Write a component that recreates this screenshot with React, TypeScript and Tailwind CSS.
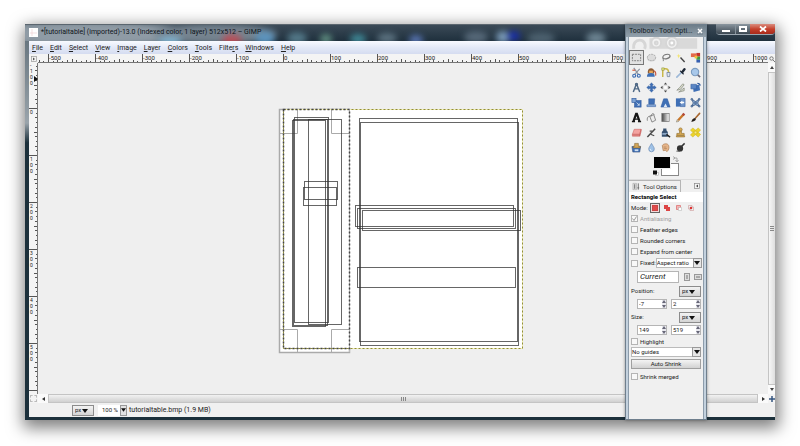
import { useState } from "react";
import type { ReactNode } from "react";

const menus = [
  ["", "F", "ile"],
  ["", "E", "dit"],
  ["", "S", "elect"],
  ["", "V", "iew"],
  ["", "I", "mage"],
  ["", "L", "ayer"],
  ["", "C", "olors"],
  ["", "T", "ools"],
  ["Filte", "r", "s"],
  ["", "W", "indows"],
  ["", "H", "elp"],
];

const BLUE = "#3f6fb5";
const DARK = "#4a4a4a";

const tools: { name: string; icon: ReactNode }[] = [
  {
    name: "Rectangle Select",
    icon: <rect x="1.5" y="2.5" width="9" height="7" fill="#e0e0e0" stroke="#777" strokeDasharray="2 1" />,
  },
  {
    name: "Ellipse Select",
    icon: (
      <g>
        <rect x="1.5" y="3" width="9" height="7" rx="3" fill="#cfcfcf" />
        <ellipse cx="6" cy="6" rx="4.5" ry="3.5" fill="#dcdcdc" stroke="#a5a5a5" strokeDasharray="2 1" />
      </g>
    ),
  },
  {
    name: "Free Select",
    icon: (
      <g fill="none" stroke="#777">
        <ellipse cx="7" cy="5" rx="4" ry="2.3" transform="rotate(-15 7 5)" strokeWidth="1.3" />
        <path d="M3.5 6.5c-.8 1 .8 1.4 0 3.5" />
      </g>
    ),
  },
  {
    name: "Fuzzy Select",
    icon: (
      <g>
        <path d="M6 6l4.5 5" stroke="#444" strokeWidth="1.5" />
        <path d="M4 2l.7 1.8 1.8.4-1.8.8L4 7l-.6-2-1.7-.8 1.7-.4z" fill="#f3e36a" />
      </g>
    ),
  },
  {
    name: "Select by Color",
    icon: (
      <g>
        <rect x="1" y="1.5" width="6" height="4" fill="#e46a4a" />
        <rect x="7" y="1" width="4" height="4" fill="#c5332b" />
        <rect x="7" y="5" width="4" height="3.5" fill="#3a9c44" />
        <rect x="7" y="8.5" width="4" height="3" fill="#355fb0" />
        <rect x="5" y="4" width="3" height="3" fill="#efc23b" />
      </g>
    ),
  },
  {
    name: "Scissors Select",
    icon: (
      <g fill="none" strokeWidth="1.3">
        <path d="M3 1l5 7M9.5 2L4 8" stroke="#8b93a0" />
        <circle cx="3.5" cy="9.5" r="1.6" stroke={BLUE} />
        <circle cx="8.5" cy="9.5" r="1.6" stroke={BLUE} />
        <path d="M1.5 3.5h3" stroke="#d65b3c" />
      </g>
    ),
  },
  {
    name: "Foreground Select",
    icon: (
      <g>
        <path d="M2 5c0-5 7-5 7 0v2H2z" fill="#8a5a34" />
        <path d="M3.5 4h4v3h-4z" fill="#e9a557" />
        <path d="M1 10.5c0-3 1.5-4 4.5-4s4 1 4 4z" fill={BLUE} />
        <path d="M8.5 4c2 .5 2.5 2.5 2 5.500" fill="none" stroke="#c34b32" strokeWidth="1.2" />
      </g>
    ),
  },
  {
    name: "Paths",
    icon: (
      <g fill="none">
        <path d="M3 11V2h3c3 0 3.5 3 3.5 5" stroke="#c9b848" strokeWidth="1.6" />
        <path d="M7.5 6h3.500l-.5 4.500h-2.500z" fill="#dce5f2" stroke="#6d7c92" strokeWidth=".8" />
        <rect x="2" y="1" width="2.5" height="2.5" fill="#dfe87d" stroke="#8a8a3a" strokeWidth=".6" />
      </g>
    ),
  },
  {
    name: "Color Picker",
    icon: (
      <g strokeLinecap="round">
        <path d="M2 11l5-5" stroke="#9db8d8" strokeWidth="1.8" />
        <path d="M6 4.5l3 3" stroke="#1f2836" strokeWidth="1.5" />
        <path d="M8 5.5l2.300-3" stroke="#1f2836" strokeWidth="2.6" />
      </g>
    ),
  },
  {
    name: "Zoom",
    icon: (
      <g>
        <circle cx="5.5" cy="5.500" r="4" fill="#a9c8ea" stroke="#7c9cc0" strokeWidth="1.2" />
        <path d="M8.5 8.500l2.500 2.500" stroke="#667" strokeWidth="1.8" />
      </g>
    ),
  },
  {
    name: "Measure",
    icon: (
      <g fill="none" stroke="#4f6885" strokeWidth="1.6">
        <path d="M6 2L2.500 11M6 2l3.500 9M3.500 7.500h5" />
        <circle cx="6" cy="2.5" r="1" fill="#9fb4cc" />
      </g>
    ),
  },
  {
    name: "Move",
    icon: (
      <path
        d="M6 .8l2 2.400H7V5h1.800V4l2.400 2-2.400 2V7H7v1.800h1L6 11.200 4 8.800h1V7H3.200v1L.8 6l2.400-2v1H5V3.200H4z"
        fill={BLUE}
        stroke="#2f5a9d"
        strokeWidth=".5"
      />
    ),
  },
  {
    name: "Align",
    icon: (
      <g fill={DARK}>
        <path d="M6 .5l1.800 2.300H4.200zM6 11.500l1.800-2.300H4.200zM.5 6l2.300-1.800v3.600zM11.500 6L9.200 4.200v3.600z" />
        <rect x="4" y="4" width="4" height="4" fill="#fff" stroke="#aaa" strokeDasharray="1 1" strokeWidth=".7" />
      </g>
    ),
  },
  {
    name: "Crop",
    icon: (
      <g fill="#d9dccb" stroke="#878b80" strokeWidth=".8">
        <path d="M2 9l4-1 4-5-1.500-1L5 6z" />
        <path d="M4 11l6-1.500V6.500L8 8z" />
      </g>
    ),
  },
  {
    name: "Rotate",
    icon: (
      <g fill={BLUE}>
        <path d="M3 4l7-1 1 6-7 2z" />
        <path d="M1 2.500h6v5H1z" fill="#5b86c4" stroke="#2f5a9d" strokeWidth=".6" />
        <path d="M8 1.500c2 0 3 1 3 2.500" fill="none" stroke="#2f5a9d" strokeWidth="1.2" />
      </g>
    ),
  },
  {
    name: "Scale",
    icon: (
      <g>
        <rect x="4" y="4" width="7" height="7" fill={BLUE} stroke="#2f5a9d" strokeWidth=".7" />
        <rect x="1" y="1.5" width="4.5" height="4.5" fill="#7ea3d4" stroke="#2f5a9d" strokeWidth=".7" />
        <path d="M6 6l3 3M9 7v2H7" stroke="#dfe9f6" strokeWidth=".8" fill="none" />
      </g>
    ),
  },
  {
    name: "Shear",
    icon: (
      <g fill={BLUE} stroke="#2f5a9d" strokeWidth=".6">
        <path d="M3 2h6.500L9 8H3z" />
        <path d="M1 8.500h9.500v2H1z" fill="#8fb0dc" />
      </g>
    ),
  },
  {
    name: "Perspective",
    icon: (
      <g>
        <path d="M4 2h4l3 9H1z" fill={BLUE} stroke="#2f5a9d" strokeWidth=".6" />
        <path d="M6 7l2 4H4z" fill="#dfe9f6" />
      </g>
    ),
  },
  {
    name: "Flip",
    icon: (
      <g>
        <path d="M1 1.500h5v9H1z" fill={BLUE} />
        <path d="M6 1.500h5v9H6z" fill="#6d93c9" stroke="#2f5a9d" strokeWidth=".6" />
        <path d="M8 4v1.300h2v1.400H8V8L5 6z" fill="#fff" />
      </g>
    ),
  },
  {
    name: "Cage Transform",
    icon: (
      <g fill="#89a8cf" stroke="#34547f" strokeWidth=".8">
        <path d="M2 2.500L6 5l4-2.500L8.500 6.500 10 10 6 8.500 2 10l1.500-3.500z" />
        <circle cx="2" cy="2.5" r="1" />
        <circle cx="10" cy="2.5" r="1" />
        <circle cx="2" cy="10" r="1" />
        <circle cx="10" cy="10" r="1" />
        <circle cx="6" cy="6.5" r="1" />
      </g>
    ),
  },
  {
    name: "Text",
    icon: (
      <g stroke="#161616" fill="none">
        <path d="M2.600 10.500L5.600 2h.8l3 8.500" strokeWidth="2.4" />
        <path d="M4 7.700h4M1 10.500h3.400M7.600 10.500H11" strokeWidth="1.4" />
      </g>
    ),
  },
  {
    name: "Bucket Fill",
    icon: (
      <g fill="#ececec" stroke="#777" strokeWidth=".9">
        <path d="M4 4.500l4.500-1.500 2 6-4 2z" />
        <path d="M5.500 5c0-3 2.500-4.500 3.500-2" fill="none" />
        <path d="M4 4.500C1.500 5 1 7 1.500 9.500" fill="none" />
      </g>
    ),
  },
  {
    name: "Blend",
    icon: <rect x="2" y="1.5" width="8" height="9" fill="url(#blend)" stroke="#777" strokeWidth=".8" />,
  },
  {
    name: "Pencil",
    icon: (
      <g>
        <path d="M3.500 9l6-6.500" stroke="#c9772b" strokeWidth="2.6" />
        <path d="M8.500 3.500l1.700-1.800" stroke="#b2473a" strokeWidth="2.6" />
        <path d="M1.500 11l.8-2.800 2 2z" fill="#e8cf9c" stroke="#555" strokeWidth=".4" />
      </g>
    ),
  },
  {
    name: "Paintbrush",
    icon: (
      <g strokeLinecap="round">
        <path d="M6 6.500l4.500-5" stroke="#a8672f" strokeWidth="1.7" />
        <path d="M1.500 10.800c.5-2.300 1.500-4 4-4.300l1 1.200c-.5 2-2.500 3-5 3.100z" fill="#26201c" />
      </g>
    ),
  },
  {
    name: "Eraser",
    icon: (
      <g stroke="#c9625f" strokeWidth=".6">
        <path d="M3.500 2.500h7.500L9.500 8H1.500z" fill="#f3a3a1" />
        <path d="M1.500 8h8v2h-8zM9.500 8L11 2.500v2.500L9.500 10z" fill="#e0807d" />
      </g>
    ),
  },
  {
    name: "Airbrush",
    icon: (
      <g stroke={DARK} fill="none">
        <path d="M1.500 11L10 2" strokeWidth="1.6" />
        <path d="M4 4.500h3M5 8l4 1.500" strokeWidth="1.2" />
      </g>
    ),
  },
  {
    name: "Ink",
    icon: (
      <g>
        <path d="M3.500 1.500h3.500v2l1.500 2v5H2v-5l1.500-2z" fill="#36506f" />
        <path d="M2.500 6.500H8v2H2.500z" fill="#8ba5c4" />
        <path d="M7 8l4 3" stroke="#222" strokeWidth="1.5" />
      </g>
    ),
  },
  {
    name: "Clone",
    icon: (
      <g fill="#dcae56" stroke="#8e6a28" strokeWidth=".7">
        <circle cx="6" cy="2.8" r="1.8" />
        <path d="M5 4.500h2v2.500h3v2H2V7h3z" />
        <path d="M1.500 9.500h9v1.300h-9z" />
      </g>
    ),
  },
  {
    name: "Heal",
    icon: (
      <g fill="#ecd42c" stroke="#d0b51c" strokeWidth=".6">
        <path d="M.5 3.500l2.500-2.500 8.500 7-2.500 3z" />
        <path d="M11.500 3.500L9 1 .5 8.500 3 11z" />
        <rect x="4.500" y="4.500" width="3" height="3" fill="#f7eb87" />
      </g>
    ),
  },
  {
    name: "Perspective Clone",
    icon: (
      <g>
        <path d="M1 5h9.500l-1 6H2z" fill={BLUE} stroke="#2f4a75" strokeWidth=".6" />
        <path d="M4 1.500h4v3h2v2H2.500v-2H4z" fill="#d3a557" stroke="#7b5c27" strokeWidth=".6" />
        <path d="M4 8h4v2H4z" fill="#cfdff2" />
      </g>
    ),
  },
  {
    name: "Blur / Sharpen",
    icon: (
      <g>
        <path d="M6 1.500c1.500 3 3 4 3 6.200a3 3 0 01-6 0C3 5.500 4.500 4.500 6 1.500z" fill="#9fc1e6" stroke="#6d8fb8" strokeWidth=".8" />
        <path d="M4.500 7.500c0 1.200.6 1.800 1.500 2" fill="none" stroke="#fff" strokeWidth=".8" />
      </g>
    ),
  },
  {
    name: "Smudge",
    icon: (
      <g fill="#e6b58a" stroke="#a97a50" strokeWidth=".7">
        <path d="M2.500 4c1-2.500 6-3 7 0 .8 2.500 0 5-2 6.500L6 9 3.500 9.500z" />
        <path d="M4 5.500h3M4.500 7.200h3" />
      </g>
    ),
  },
  {
    name: "Dodge / Burn",
    icon: (
      <g>
        <circle cx="5.5" cy="7" r="3.400" fill="#333" />
        <path d="M6.500 5.500l4-4" stroke="#333" strokeWidth="1.6" />
        <path d="M1.500 10h4" stroke="#555" />
      </g>
    ),
  },
];

// rectangles on the canvas, as x1, y1, x2, y2
const leftBoxes = [
  [11.5, 8.5, 45.5, 213.5],
  [9.5, 11.5, 42.5, 217.5],
  [10.5, 10.5, 44.5, 216.5],
  [25.5, 10.5, 58.5, 215.5],
  [21.5, 72.5, 54.5, 90.5],
  [20.5, 78.5, 53.5, 96.5],
];
const rightBoxes = [
  [76.5, 9.5, 234.5, 232.5],
  [77.5, 13.5, 235.5, 236.5],
  [72.5, 96.5, 230.5, 117.5],
  [74.5, 99.5, 232.5, 119.5],
  [79.5, 101.5, 237.5, 121.5],
  [74.5, 158.5, 232.5, 178.5],
];

function tickLength(unit: number) {
  if (unit % 100 === 0) return 9;
  if (unit % 50 === 0) return 4;
  return unit % 20 === 0 ? 3 : 2;
}

function Ruler({ vertical, from, to, zero }: { vertical?: boolean; from: number; to: number; zero: number }) {
  const units: number[] = [];
  for (let u = from; u <= to; u += 10) units.push(u);
  return (
    <svg className="h-full w-full" fontFamily="Roboto, sans-serif" fontSize={vertical ? 5 : 6} fill="#222">
      {units.map((u) => {
        const p = Math.round(zero + u * 0.47) + 0.5;
        const len = tickLength(u);
        return vertical ? (
          <path key={u} d={`M${9 - len} ${p}h${len}`} stroke="#555" />
        ) : (
          <path key={u} d={`M${p} ${9 - len}v${len}`} stroke="#555" />
        );
      })}
      {units
        .filter((u) => u % 100 === 0 && !(vertical && u > 500))
        .map((u) => {
          const p = Math.round(zero + u * 0.47);
          if (!vertical) {
            return (
              <text key={u} x={p + 1} y="6">
                {u}
              </text>
            );
          }
          return String(u)
            .split("")
            .map((c, i) => (
              <text key={`${u}-${i}`} x="1" y={p + 6 + i * 6}>
                {c}
              </text>
            ));
        })}
      <path d={vertical ? "M8.500 0v2000" : "M0 8.500h4000"} stroke="#777" />
    </svg>
  );
}

function Down({ className = "" }: { className?: string }) {
  return (
    <svg viewBox="0 0 6 4" className={`pointer-events-none h-1 w-1.5 ${className}`}>
      <path d="M0 0h6L3 4z" fill="#111" />
    </svg>
  );
}

function UnitSelect({ label }: { label: string }) {
  return (
    <span className="relative flex">
      <select
        aria-label={label}
        className="h-[11px] w-[22px] appearance-none border border-[#8c8c8c] bg-linear-to-b from-[#f3f3f3] to-[#d4d4d4] pl-0.5 text-[6px] leading-[8px]"
      >
        <option>px</option>
        <option>in</option>
        <option>mm</option>
      </select>
      <Down className="absolute top-1 right-1.5" />
    </span>
  );
}

function Spin({ label, value }: { label: string; value: string }) {
  return (
    <div className="flex h-[10px] flex-1 border border-[#b5b5b5] bg-white">
      <input aria-label={label} defaultValue={value} className="w-full min-w-0 pl-px text-[6px] leading-[8px]" />
      <div className="flex w-1 shrink-0 flex-col justify-between bg-[#e8e8ee]">
        <button aria-label={`Increase ${label}`} className="flex">
          <svg viewBox="0 0 4 3" className="h-[3px] w-1">
            <path d="M0 3h4L2 0z" fill="#667" />
          </svg>
        </button>
        <button aria-label={`Decrease ${label}`} className="flex">
          <svg viewBox="0 0 4 3" className="h-[3px] w-1">
            <path d="M0 0h4L2 3z" fill="#667" />
          </svg>
        </button>
      </div>
    </div>
  );
}

function Check({ label, disabled, checked }: { label: string; disabled?: boolean; checked?: boolean }) {
  return (
    <label className={`flex h-[11px] items-center gap-0.5 ${disabled ? "text-[#a0a0a0]" : ""}`}>
      <span className="relative flex">
        <input
          type="checkbox"
          disabled={disabled}
          defaultChecked={checked}
          className="peer h-[7px] w-[7px] appearance-none border border-[#b4b4b4] bg-[#f8f8f8]"
        />
        <svg viewBox="0 0 7 7" className="pointer-events-none absolute inset-0 hidden h-[7px] w-[7px] peer-checked:block">
          <path d="M1.500 3.500L3 5.500 5.500 1.500" fill="none" stroke="#999" />
        </svg>
      </span>
      {label}
    </label>
  );
}

function Toolbox() {
  const [tool, setTool] = useState("Rectangle Select");
  return (
    <aside className="absolute top-0 right-[68px] bottom-0 flex w-[82px] flex-col border border-[#6f7f8d] bg-[#c3d1de] px-0.5 text-[6px] leading-[8px] text-[#222] shadow-[0_0_3px_rgba(0,0,0,0.4)]">
      <header className="-mx-0.5 flex h-[12px] shrink-0 items-center justify-between bg-linear-to-b from-[#6d7d89] to-[#93a1ac] px-[3px]">
        <h2 className="text-[7px] whitespace-nowrap text-[#161c22]">Toolbox - Tool Opti...</h2>
        <button aria-label="Close toolbox" className="flex h-2 w-1.5 items-center justify-center bg-[#7c8b97]">
          <svg viewBox="0 0 6 6" className="h-1.5 w-1.5">
            <path d="M1 1l4 4M5 1L1 5" stroke="#fff" strokeWidth="1.5" />
          </svg>
        </button>
      </header>
      <div className="flex flex-1 flex-col border-x border-[#8c9cab] bg-[#f0f0f0]">
        <svg viewBox="0 0 76 13" className="h-[13px] w-full shrink-0">
          <path d="M21 1h49v11H21z" fill="#d9d9d9" />
          <g fill="#f2f2f2" stroke="#d6d6d6" strokeWidth="2">
            <path d="M5 12c-1-6 2-9 6-9s7 4 5 9" fill="none" strokeWidth="3" />
            <circle cx="28" cy="5.5" r="5" />
            <circle cx="28" cy="6" r="1.5" />
            <circle cx="44" cy="6" r="6" />
            <circle cx="44" cy="6" r="2.5" fill="#fff" />
          </g>
        </svg>
        <div className="grid grid-cols-5">
          {tools.map((t) => (
            <button
              key={t.name}
              title={t.name}
              aria-pressed={tool === t.name}
              onClick={() => setTool(t.name)}
              className={`flex h-[15px] items-center justify-center border ${
                tool === t.name ? "border-[#777] bg-[#e2e2e2]" : "border-transparent"
              }`}
            >
              <svg viewBox="0 0 12 12" className="h-[11px] w-[11px] shrink-0">
                {t.icon}
              </svg>
            </button>
          ))}
        </div>
        <div className="flex h-[24px] shrink-0 justify-center">
          <svg viewBox="0 0 28 22" className="h-[22px] w-[28px]">
            <rect x="9.500" y="8.500" width="17" height="12" fill="#fff" stroke="#888" />
            <rect x="1" y="1" width="18" height="13" fill="#eee" />
            <rect x="2" y="2" width="16" height="11" fill="#000" />
            <path d="M22 3h3v3M21 1.500l2 1.500-2 1.500M23.500 5l1.500 2 1.500-2" fill="none" stroke="#999" strokeWidth=".8" />
            <rect x="3.500" y="17.500" width="3" height="3" fill="#fff" stroke="#999" strokeWidth=".5" />
            <rect x="1" y="15.500" width="4" height="4" fill="#111" />
          </svg>
        </div>
        <div className="flex h-[13px] shrink-0 items-center justify-between border-t border-[#ddd] pr-[3px]">
          <button className="flex h-[13px] items-center gap-0.5 border-t border-r border-[#b5b5b5] px-[3px] text-[6px] whitespace-nowrap">
            <svg viewBox="0 0 10 9" className="h-[9px] w-[9px]">
              <path d="M1 1h4v7H1z" fill="#ddd" stroke="#999" strokeWidth=".5" />
              <path d="M3 2v5M7 1v7M6 6h2" stroke="#666" />
            </svg>
            Tool Options
          </button>
          <button aria-label="Configure this tab">
            <svg viewBox="0 0 6 6" className="h-1.5 w-1.5">
              <rect x=".5" y=".5" width="5" height="5" fill="#f4f4f4" stroke="#888" strokeWidth=".7" />
              <path d="M4 1.500v3L2 3z" fill="#444" />
            </svg>
          </button>
        </div>
        <h3 className="h-[10px] shrink-0 bg-white px-0.5 leading-[10px] font-bold whitespace-nowrap text-black">
          Rectangle Select
        </h3>
        <div className="flex flex-col px-0.5 whitespace-nowrap">
          <div className="flex h-[11px] items-center gap-0.5">
            Mode:
            <button aria-label="Replace selection" className="border border-[#666] bg-[#f3dada] p-px">
              <svg viewBox="0 0 6 6" className="h-1.5 w-1.5">
                <rect x=".5" y=".5" width="5" height="5" fill="#e04a4a" stroke="#c44" />
              </svg>
            </button>
            <button aria-label="Add to selection" className="px-0.5">
              <svg viewBox="0 0 6 6" className="h-1.5 w-1.5">
                <path d="M0 0h4v2h2v4H2V4H0z" fill="#dd4545" />
              </svg>
            </button>
            <button aria-label="Subtract from selection" className="px-0.5">
              <svg viewBox="0 0 6 6" className="h-1.5 w-1.5">
                <path d="M4.500 .5h-4v4h2v-2h2z" fill="#f3b6b6" stroke="#d66" strokeWidth=".7" />
                <path d="M2.500 2.500h3v3h-3z" fill="#fff" stroke="#bbb" strokeWidth=".6" />
              </svg>
            </button>
            <button aria-label="Intersect with selection" className="px-0.5">
              <svg viewBox="0 0 6 6" className="h-1.5 w-1.5">
                <path d="M.5 .5h3.500v3.500H.5zM2 2h3.500v3.500H2z" fill="none" stroke="#c99" strokeWidth=".6" />
                <path d="M2 2h2v2H2z" fill="#d33" />
              </svg>
            </button>
          </div>
          <Check label="Antialiasing" disabled checked />
          <Check label="Feather edges" />
          <Check label="Rounded corners" />
          <Check label="Expand from center" />
          <div className="flex h-[12px] items-center justify-between">
            <Check label="Fixed:" />
            <span className="relative flex">
              <select
                aria-label="Fixed property"
                className="h-[10px] w-[46px] appearance-none border border-[#bbb] bg-white text-[6px] leading-[8px]"
              >
                <option>Aspect ratio</option>
                <option>Width</option>
                <option>Height</option>
                <option>Size</option>
              </select>
              <span className="pointer-events-none absolute inset-y-0 right-0 flex w-[9px] items-center justify-center border border-[#999] bg-[#e6e6e6]">
                <Down />
              </span>
            </span>
          </div>
          <div className="flex h-[15px] items-center pl-[6px]">
            <input
              aria-label="Aspect ratio"
              defaultValue="Current"
              className="h-[12px] w-[42px] border border-[#b5b5b5] bg-white pl-0.5 text-[8px] italic"
            />
            <button aria-label="Portrait" className="ml-1 p-px">
              <svg viewBox="0 0 6 8" className="h-2 w-1.5">
                <rect x=".5" y=".5" width="5" height="7" fill="#ddd" stroke="#999" />
                <path d="M2 3h2M2 5h2" stroke="#777" />
              </svg>
            </button>
            <button aria-label="Landscape" className="ml-0.5 p-px">
              <svg viewBox="0 0 8 6" className="h-1.5 w-2">
                <rect x=".5" y=".5" width="7" height="5" fill="#ddd" stroke="#999" />
                <path d="M2 3h4" stroke="#777" />
              </svg>
            </button>
          </div>
          <div className="flex h-[14px] items-center justify-between">
            Position:
            <UnitSelect label="Position unit" />
          </div>
          <div className="flex h-[12px] items-center gap-1 pl-[6px]">
            <Spin label="Position X" value="-7" />
            <Spin label="Position Y" value="2" />
          </div>
          <div className="flex h-[14px] items-center justify-between">
            Size:
            <UnitSelect label="Size unit" />
          </div>
          <div className="flex h-[12px] items-center gap-1 pl-[6px]">
            <Spin label="Width" value="149" />
            <Spin label="Height" value="519" />
          </div>
          <Check label="Highlight" />
          <span className="relative flex">
            <select
              aria-label="Guides"
              className="h-[10px] w-full appearance-none border border-[#bbb] bg-white text-[6px] leading-[8px]"
            >
              <option>No guides</option>
              <option>Center lines</option>
              <option>Rule of thirds</option>
            </select>
            <span className="pointer-events-none absolute inset-y-0 right-0 flex w-[9px] items-center justify-center border border-[#999] bg-[#e6e6e6]">
              <Down />
            </span>
          </span>
          <button className="my-0.5 h-[10px] border border-[#a0a0a0] bg-linear-to-b from-[#f4f4f4] to-[#d2d2d2] text-[6px] leading-[8px]">
            Auto Shrink
          </button>
          <Check label="Shrink merged" />
        </div>
      </div>
    </aside>
  );
}

function Drawing() {
  return (
    <svg width="240" height="240" className="shrink-0 overflow-visible" fill="none">
      <rect x="-3.500" y=".5" width="70" height="243" fill="#fff" stroke="#aaa" strokeWidth="1.500" />
      <rect x="0" y="0" width="240" height="240" fill="#fff" />
      <path
        d="M-3 24.500H14.500V1M66 24.500H48.500V1M-3 220.500H14.500V243M66 220.500H48.500V243"
        stroke="#aaa"
      />
      <rect x=".5" y=".5" width="239" height="239" stroke="#f3f0b4" />
      <rect x=".5" y=".5" width="239" height="239" stroke="#8f8c3c" strokeDasharray="2 2" />
      <path d="M66.500 0v243" stroke="#bbb" />
      <rect x=".5" y=".5" width="66" height="239" stroke="#444" strokeWidth="1.500" strokeDasharray="2 2" />
      {leftBoxes.concat(rightBoxes).map(([x1, y1, x2, y2], i) => (
        <rect key={i} x={x1} y={y1} width={x2 - x1} height={y2 - y1} stroke="#333" strokeOpacity=".75" />
      ))}
    </svg>
  );
}

function TitleBar() {
  return (
    <header className="relative flex h-[17px] shrink-0 items-center overflow-hidden bg-linear-to-b from-[#3d4c59] to-[#1f303d] pl-1">
      <svg className="absolute inset-0 h-full w-full">
        <g className="blur-[3px]">
          <ellipse cx="60" cy="10" rx="110" ry="13" fill="#8f9ba5" />
          <ellipse cx="190" cy="10" rx="62" ry="10" fill="#75838f" />
          <ellipse cx="145" cy="17" rx="12" ry="5" fill="#7fb0cc" />
          <ellipse cx="207" cy="16" rx="10" ry="6" fill="#b8505a" />
          <ellipse cx="240" cy="14" rx="10" ry="7" fill="#5c93bc" />
          <ellipse cx="272" cy="14" rx="10" ry="6" fill="#537888" />
          <ellipse cx="301" cy="15" rx="6" ry="5" fill="#5f8d80" />
          <ellipse cx="333" cy="15" rx="8" ry="5" fill="#3f8795" />
          <ellipse cx="362" cy="14" rx="10" ry="5" fill="#5c7280" />
          <ellipse cx="391" cy="16" rx="7" ry="5" fill="#5773b0" />
          <ellipse cx="451" cy="13" rx="12" ry="6" fill="#566878" />
          <ellipse cx="478" cy="13" rx="7" ry="6" fill="#7a9ab8" />
          <ellipse cx="489" cy="12" rx="6" ry="5" fill="#1a2fa8" />
          <ellipse cx="516" cy="14" rx="14" ry="6" fill="#4c606e" />
          <ellipse cx="571" cy="14" rx="10" ry="6" fill="#6c8391" />
        </g>
        <path d="M0 .5h4000" stroke="#5b666f" />
      </svg>
      <svg viewBox="0 0 9 9" className="relative mr-[3px] h-[9px] w-[9px]">
        <path d="M0 0h9v9H0z" fill="#fff" />
        <path d="M1 5h7M3 1v7" stroke="#ecc9cf" strokeWidth=".6" />
      </svg>
      <h1 className="relative text-[7px] whitespace-nowrap text-[#10161c]">
        *[tutorialtable] (imported)-13.0 (Indexed color, 1 layer) 512x512 – GIMP
      </h1>
      <div className="absolute top-0 right-0 flex h-[11px] overflow-hidden rounded-b-sm border-b border-[#9aa6b0]">
        <button aria-label="Minimize" className="flex w-[20px] items-end justify-center border-r border-[#87939c] bg-linear-to-b from-[#8b969f] to-[#3c4852] pb-0.5">
          <span className="h-0.5 w-2 bg-white" />
        </button>
        <button aria-label="Maximize" className="flex w-[14px] items-center justify-center bg-linear-to-b from-[#8b969f] to-[#3c4852]">
          <span className="h-[6px] w-2 border-2 border-white" />
        </button>
        <button aria-label="Close" className="flex w-[25px] items-center justify-center bg-linear-to-b from-[#d98b7d] via-[#c5402c] to-[#a82a1a]">
          <svg viewBox="0 0 8 6" className="h-1.5 w-2">
            <path d="M1 .5l6 5M7 .5l-6 5" stroke="#fff" strokeWidth="1.800" />
          </svg>
        </button>
      </div>
    </header>
  );
}

export default function App() {
  return (
    <main className="flex min-h-screen flex-col bg-white px-[25px] pt-6 pb-[26px] font-[Roboto,sans-serif] text-[#222]">
      <svg className="absolute h-0 w-0">
        <linearGradient id="blend">
          <stop offset="0" stopColor="#444" />
          <stop offset="1" stopColor="#fff" />
        </linearGradient>
      </svg>
      <div className="relative flex flex-1 flex-col rounded-t-sm bg-linear-to-b from-[#5f6d77] from-0% via-[#9aa4ab] via-25% to-[#1c303b] to-30% shadow-[1px_5px_16px_3px_rgba(0,0,0,0.5)]">
        <TitleBar />
        <div className="ml-1 flex flex-1 flex-col border-b-[3px] border-[#1c303b] bg-[#f0f0f0]">
          <nav className="flex h-[13px] shrink-0 items-center gap-[7px] bg-linear-to-b from-[#f8faff] via-[#e3e9f7] to-[#d5dcf0] pl-[3px] text-[7px] leading-[10px]">
            {menus.map(([before, key, after]) => (
              <button key={key + after}>
                {before}
                <u>{key}</u>
                {after}
              </button>
            ))}
          </nav>
          <div className="grid min-h-[340px] flex-1 grid-cols-[9px_1fr_7px] grid-rows-[9px_1fr_9px] bg-[#f4f4f4]">
            <button aria-label="Image menu" className="flex items-center justify-center">
              <svg viewBox="0 0 6 6" className="h-1.5 w-1.5">
                <rect x=".5" y=".5" width="5" height="5" fill="none" stroke="#999" strokeWidth=".7" />
                <path d="M2 1.500v3l2-1.500z" fill="#555" />
              </svg>
            </button>
            <div className="overflow-hidden">
              <Ruler from={-520} to={1020} zero={245} />
            </div>
            <button aria-label="Zoom image when window size changes" className="flex items-center justify-center">
              <svg viewBox="0 0 6 6" className="h-1.5 w-1.5">
                <circle cx="2.500" cy="2.500" r="1.700" fill="none" stroke="#777" />
                <path d="M4 4l2 2" stroke="#777" />
              </svg>
            </button>
            <div className="relative">
              <div className="absolute inset-0 overflow-hidden">
                <Ruler vertical from={-100} to={600} zero={45} />
                <svg viewBox="0 0 4 6" className="absolute top-[13px] right-0 h-1.5 w-1">
                  <path d="M0 0l4 3-4 3z" fill="#111" />
                </svg>
              </div>
            </div>
            <div className="flex items-center justify-center overflow-hidden bg-[#efefef]">
              <Drawing />
            </div>
            <div className="flex flex-col items-center bg-[#fafafa]">
              <button aria-label="Scroll up" className="flex h-[9px] items-center">
                <svg viewBox="0 0 4 3" className="h-[3px] w-1">
                  <path d="M0 3h4L2 0z" fill="#444" />
                </svg>
              </button>
              <div className="flex w-full flex-1 flex-col items-center justify-center gap-px border border-r-0 border-[#c4c4c4] bg-linear-to-r from-[#f6f6f6] to-[#dedede]">
                <span className="h-px w-1 bg-[#888]" />
                <span className="h-px w-1 bg-[#888]" />
                <span className="h-px w-1 bg-[#888]" />
              </div>
              <button aria-label="Scroll down" className="flex h-[9px] items-center">
                <svg viewBox="0 0 4 3" className="h-[3px] w-1">
                  <path d="M0 0h4L2 3z" fill="#444" />
                </svg>
              </button>
            </div>
            <button aria-label="Toggle Quick Mask" className="m-px border border-dashed border-[#bbb]" />
            <div className="flex items-center bg-[#fafafa]">
              <button aria-label="Scroll left" className="flex w-[10px] justify-center">
                <svg viewBox="0 0 3 4" className="h-1 w-[3px]">
                  <path d="M3 0v4L0 2z" fill="#333" />
                </svg>
              </button>
              <div className="flex h-full flex-1 items-center justify-center gap-px border border-[#c4c4c4] bg-linear-to-b from-[#f2f2f2] to-[#d0d0d0]">
                <span className="h-1 w-px bg-[#888]" />
                <span className="h-1 w-px bg-[#888]" />
                <span className="h-1 w-px bg-[#888]" />
              </div>
              <button aria-label="Scroll right" className="flex w-[10px] justify-center">
                <svg viewBox="0 0 3 4" className="h-1 w-[3px]">
                  <path d="M0 0v4l3-2z" fill="#333" />
                </svg>
              </button>
            </div>
            <button aria-label="Navigate the image display" className="flex items-center justify-center">
              <svg viewBox="0 0 6 6" className="h-1.5 w-1.5">
                <path d="M3 0v6M0 3h6" stroke="#34547f" strokeWidth="1.500" />
              </svg>
            </button>
          </div>
          <footer className="flex h-[14px] shrink-0 items-center pl-[43px] text-[7px] leading-[10px]">
            <UnitSelect label="Image unit" />
            <div className="mr-0.5 ml-1 flex h-[11px]">
              <input
                aria-label="Zoom"
                defaultValue="100 %"
                className="w-[22px] bg-white pr-0.5 text-right text-[6px] leading-[8px]"
              />
              <button aria-label="Zoom presets" className="flex w-[7px] items-center justify-center border border-[#999] bg-[#e2e2e2]">
                <Down />
              </button>
            </div>
            tutorialtable.bmp (1.9 MB)
          </footer>
        </div>
        <Toolbox />
      </div>
    </main>
  );
}
